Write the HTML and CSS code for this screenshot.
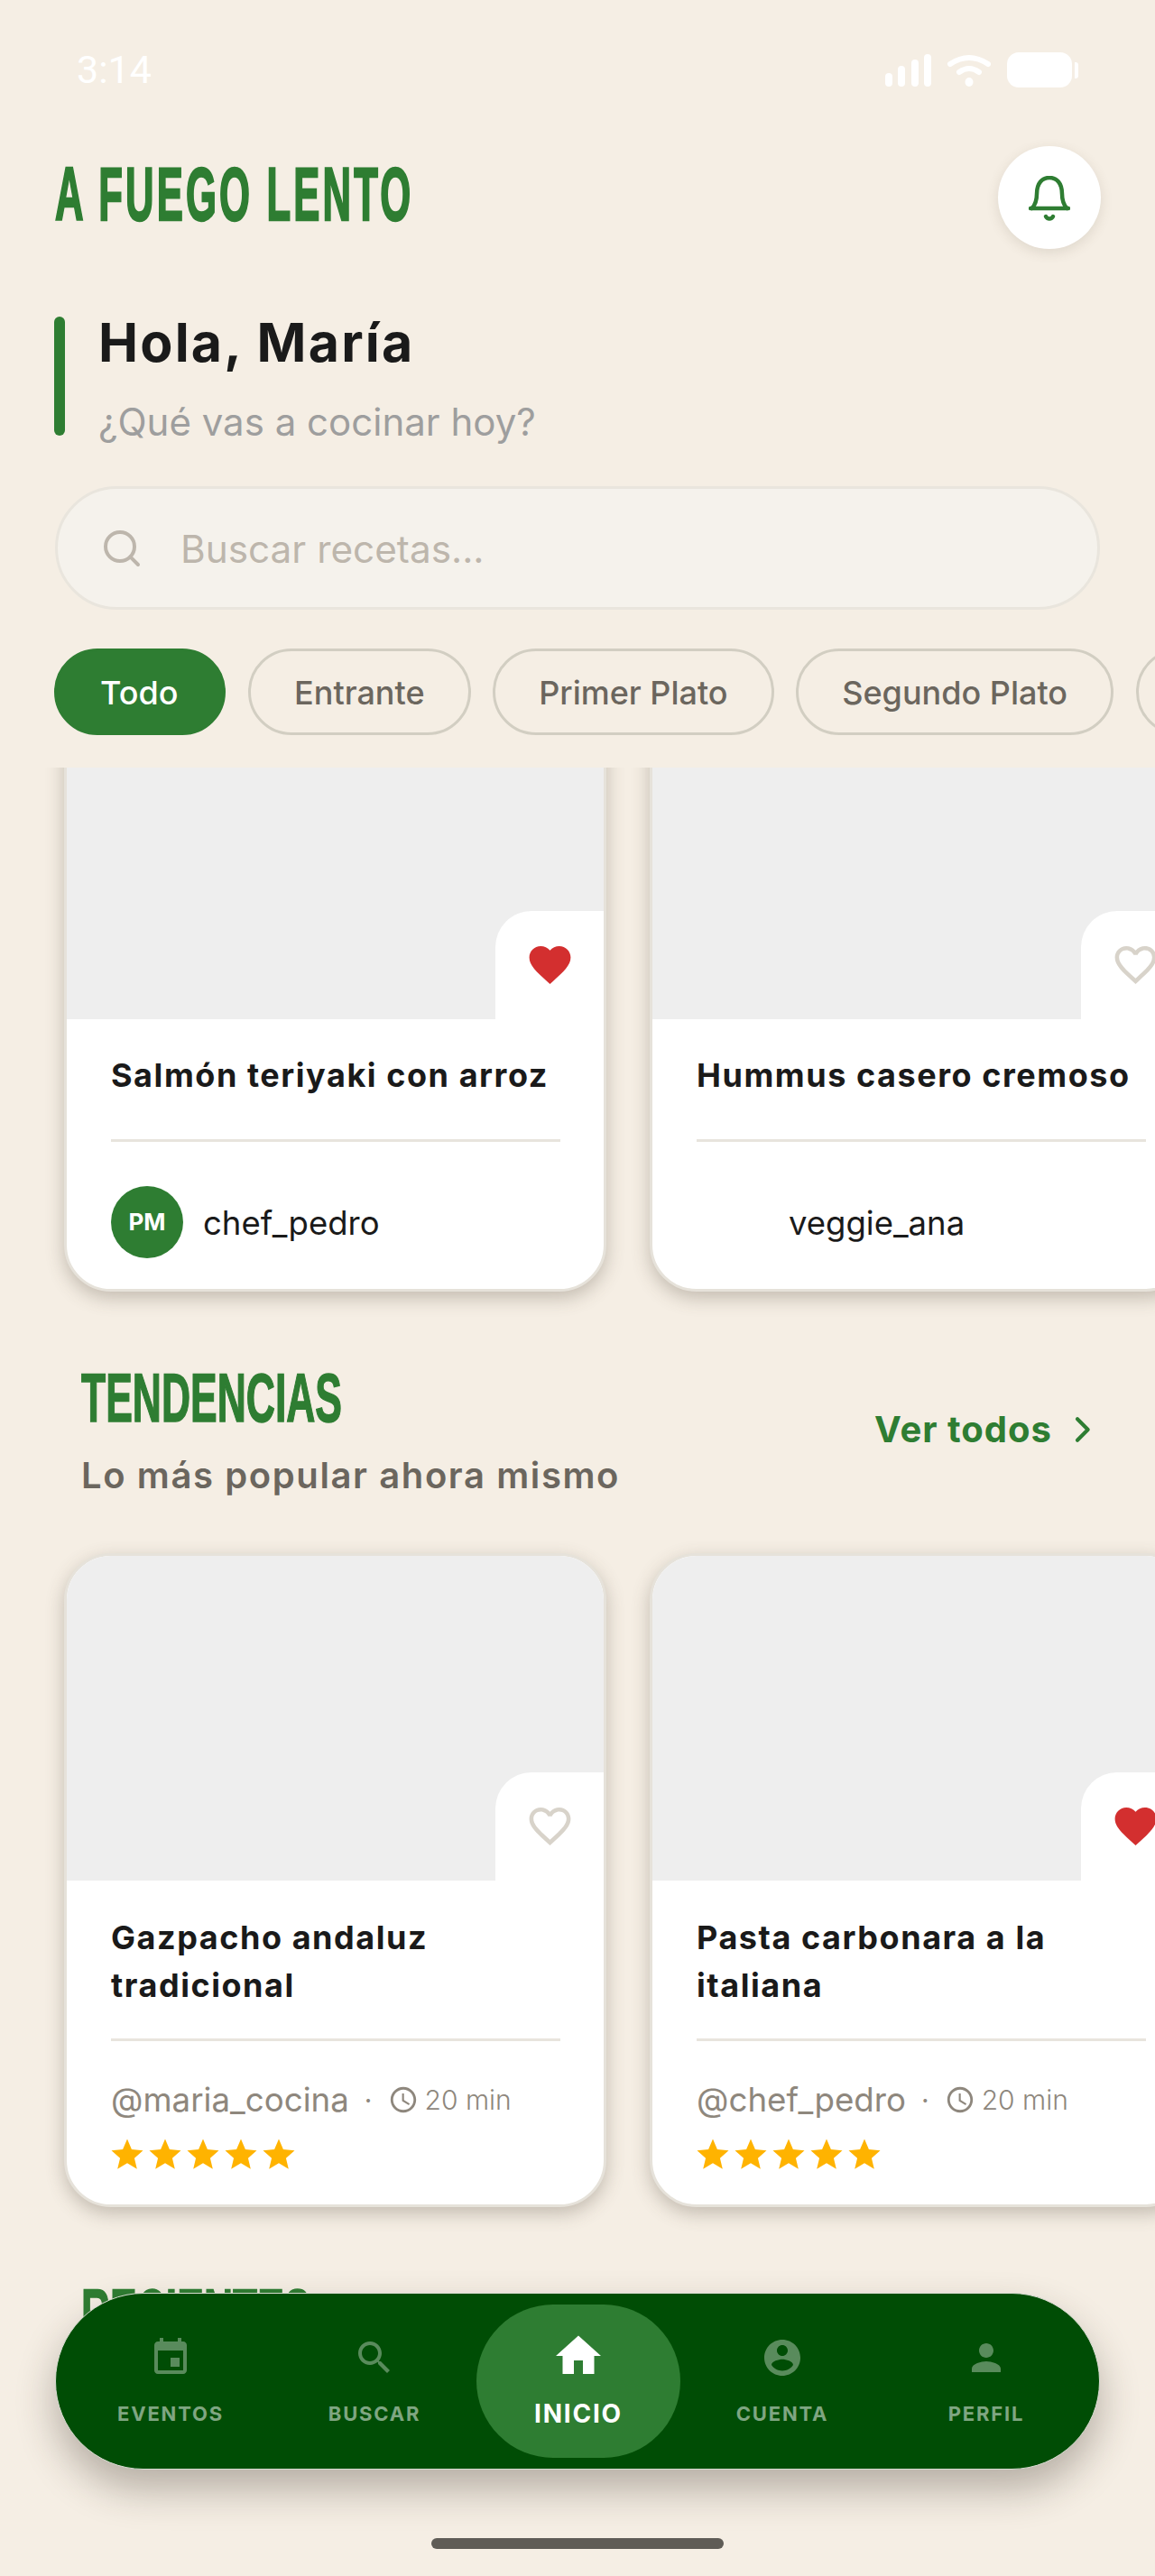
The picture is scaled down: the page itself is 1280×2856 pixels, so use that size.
FILE: index.html
```html
<!DOCTYPE html>
<html lang="es">
<head>
<meta charset="utf-8">
<title>A Fuego Lento</title>
<link rel="stylesheet" href="styles.css">
</head>
<body>
<div class="page">
  <div class="status">
    <span class="time">3:14</span>
    <div class="status-icons">
      <div class="signal"><i class="s1"></i><i class="s2"></i><i class="s3"></i><i class="s4"></i></div>
      <svg class="wifi" viewBox="0 0 49 36" fill="none" stroke="#fff" stroke-width="6" stroke-linecap="round"><path d="M4 11Q25 -3 46 11"/><path d="M14 20Q25 12 36 20"/><ellipse cx="25" cy="31" rx="4.5" ry="5" fill="#fff" stroke="none"/></svg>
      <div class="battery"><i class="battery-body"></i><i class="battery-tip"></i></div>
    </div>
  </div>

  <header class="header">
    <h1 class="brand">A FUEGO LENTO</h1>
    <button class="bell">
      <svg viewBox="0 0 46 50" width="46" height="50" fill="none" stroke="#2E7D32" stroke-width="4.5" stroke-linecap="round"><path d="M2 36h42"/><path d="M3.5 36c4-4 5.5-9 5.5-16C9 8 15 2 23 2s14 6 14 18c0 7 1.500 12 5.500 16"/><path d="M19 45a4.500 4.500 0 0 0 8 0"/></svg>
    </button>
  </header>

  <section class="greeting">
    <div class="greeting-bar"></div>
    <div class="greeting-text">
      <h2 class="hello">Hola, María</h2>
      <p class="question">¿Qué vas a cocinar hoy?</p>
    </div>
  </section>

  <div class="search">
    <svg class="search-icon" viewBox="0 0 24 24" fill="none" stroke="#BDB6AC" stroke-width="2" stroke-linecap="round"><circle cx="11" cy="11" r="8"/><path d="M21 21l-4.300-4.300"/></svg>
    <span class="search-text">Buscar recetas...</span>
  </div>

  <div class="chips">
    <span class="chip chip-on">Todo</span>
    <span class="chip">Entrante</span>
    <span class="chip">Primer Plato</span>
    <span class="chip">Segundo Plato</span>
    <span class="chip chip-more"></span>
  </div>

  <main class="feed">
    <div class="row row-first">
      <article class="card">
        <div class="card-image">
          <div class="fav"><svg class="heart" viewBox="0 0 24 24"><path fill="#D32F2F" d="M12 21.350l-1.450-1.320C5.400 15.360 2 12.280 2 8.500 2 5.420 4.420 3 7.500 3c1.740 0 3.410.81 4.500 2.090C13.090 3.810 14.760 3 16.500 3 19.580 3 22 5.420 22 8.500c0 3.780-3.400 6.860-8.550 11.540L12 21.350z"/></svg></div>
        </div>
        <div class="card-body card-body-user">
          <h3 class="card-title title-one">Salmón teriyaki con arroz</h3>
          <div class="user-row"><span class="avatar">PM</span><span class="user-name">chef_pedro</span></div>
        </div>
      </article>
      <article class="card">
        <div class="card-image">
          <div class="fav"><svg class="heart" viewBox="0 0 24 24"><path fill="#D8D3CA" d="M16.500 3c-1.740 0-3.410.81-4.500 2.090C10.910 3.810 9.240 3 7.500 3 4.420 3 2 5.420 2 8.500c0 3.780 3.400 6.860 8.550 11.540L12 21.350l1.450-1.320C18.600 15.360 22 12.280 22 8.500 22 5.420 19.580 3 16.500 3zm-4.400 15.550l-.1.100-.1-.1C7.140 14.240 4 11.390 4 8.500 4 6.500 5.500 5 7.500 5c1.540 0 3.040.99 3.570 2.360h1.870C13.460 5.990 14.960 5 16.500 5c2 0 3.500 1.500 3.500 3.500 0 2.890-3.140 5.740-7.900 10.050z"/></svg></div>
        </div>
        <div class="card-body card-body-user">
          <h3 class="card-title title-one">Hummus casero cremoso</h3>
          <div class="user-row"><span class="avatar avatar-blank"></span><span class="user-name">veggie_ana</span></div>
        </div>
      </article>
    </div>

    <div class="section-head">
      <div>
        <h2 class="section-title title-tend">TENDENCIAS</h2>
        <p class="section-sub">Lo más popular ahora mismo</p>
      </div>
      <a class="see-all">Ver todos<svg class="chevron" viewBox="0 0 24 24" fill="none" stroke="#2E7D32" stroke-width="2.500" stroke-linecap="round" stroke-linejoin="round"><path d="M9 5l7 7-7 7"/></svg></a>
    </div>

    <div class="row">
      <article class="card">
        <div class="card-image">
          <div class="fav"><svg class="heart" viewBox="0 0 24 24"><path fill="#D8D3CA" d="M16.500 3c-1.740 0-3.410.81-4.500 2.090C10.910 3.810 9.240 3 7.500 3 4.420 3 2 5.420 2 8.500c0 3.780 3.400 6.860 8.550 11.540L12 21.350l1.450-1.320C18.600 15.360 22 12.280 22 8.500 22 5.420 19.580 3 16.500 3zm-4.400 15.550l-.1.100-.1-.1C7.140 14.240 4 11.390 4 8.500 4 6.500 5.500 5 7.500 5c1.540 0 3.040.99 3.570 2.360h1.870C13.460 5.990 14.960 5 16.500 5c2 0 3.500 1.500 3.500 3.500 0 2.890-3.140 5.740-7.900 10.050z"/></svg></div>
        </div>
        <div class="card-body">
          <h3 class="card-title">Gazpacho andaluz<br>tradicional</h3>
          <div class="meta">
            <span class="author">@maria_cocina</span><span class="dot">·</span>
            <svg class="clock" viewBox="0 0 24 24"><path fill="#8E877D" d="M11.990 2C6.470 2 2 6.480 2 12s4.470 10 9.990 10C17.520 22 22 17.520 22 12S17.520 2 11.990 2zM12 20c-4.420 0-8-3.580-8-8s3.580-8 8-8 8 3.580 8 8-3.580 8-8 8zm.5-13H11v6l5.250 3.150.75-1.230-4.500-2.670z"/></svg>
            <span class="duration">20 min</span>
          </div>
          <div class="stars">
            <svg viewBox="0 0 24 24"><path d="M12 17.270L18.180 21l-1.640-6.810L22 9.240l-7.190-.61L12 2 9.190 8.630 2 9.240l5.460 4.950L5.820 21z"/></svg>
            <svg viewBox="0 0 24 24"><path d="M12 17.270L18.180 21l-1.640-6.810L22 9.240l-7.190-.61L12 2 9.190 8.630 2 9.240l5.460 4.950L5.820 21z"/></svg>
            <svg viewBox="0 0 24 24"><path d="M12 17.270L18.180 21l-1.640-6.810L22 9.240l-7.190-.61L12 2 9.190 8.630 2 9.240l5.460 4.950L5.820 21z"/></svg>
            <svg viewBox="0 0 24 24"><path d="M12 17.270L18.180 21l-1.640-6.810L22 9.240l-7.190-.61L12 2 9.190 8.630 2 9.240l5.460 4.950L5.820 21z"/></svg>
            <svg viewBox="0 0 24 24"><path d="M12 17.270L18.180 21l-1.640-6.810L22 9.240l-7.190-.61L12 2 9.190 8.630 2 9.240l5.460 4.950L5.820 21z"/></svg>
          </div>
        </div>
      </article>
      <article class="card">
        <div class="card-image">
          <div class="fav"><svg class="heart" viewBox="0 0 24 24"><path fill="#D32F2F" d="M12 21.350l-1.450-1.320C5.400 15.360 2 12.280 2 8.500 2 5.420 4.420 3 7.500 3c1.740 0 3.410.81 4.500 2.090C13.090 3.810 14.760 3 16.500 3 19.580 3 22 5.420 22 8.500c0 3.780-3.400 6.860-8.550 11.540L12 21.350z"/></svg></div>
        </div>
        <div class="card-body">
          <h3 class="card-title">Pasta carbonara a la<br>italiana</h3>
          <div class="meta">
            <span class="author">@chef_pedro</span><span class="dot">·</span>
            <svg class="clock" viewBox="0 0 24 24"><path fill="#8E877D" d="M11.990 2C6.470 2 2 6.480 2 12s4.470 10 9.990 10C17.520 22 22 17.520 22 12S17.520 2 11.990 2zM12 20c-4.420 0-8-3.580-8-8s3.580-8 8-8 8 3.580 8 8-3.580 8-8 8zm.5-13H11v6l5.250 3.150.75-1.230-4.500-2.670z"/></svg>
            <span class="duration">20 min</span>
          </div>
          <div class="stars">
            <svg viewBox="0 0 24 24"><path d="M12 17.270L18.180 21l-1.640-6.810L22 9.240l-7.190-.61L12 2 9.190 8.630 2 9.240l5.460 4.950L5.820 21z"/></svg>
            <svg viewBox="0 0 24 24"><path d="M12 17.270L18.180 21l-1.640-6.810L22 9.240l-7.190-.61L12 2 9.190 8.630 2 9.240l5.460 4.950L5.820 21z"/></svg>
            <svg viewBox="0 0 24 24"><path d="M12 17.270L18.180 21l-1.640-6.810L22 9.240l-7.190-.61L12 2 9.190 8.630 2 9.240l5.460 4.950L5.820 21z"/></svg>
            <svg viewBox="0 0 24 24"><path d="M12 17.270L18.180 21l-1.640-6.810L22 9.240l-7.190-.61L12 2 9.190 8.630 2 9.240l5.460 4.950L5.820 21z"/></svg>
            <svg viewBox="0 0 24 24"><path d="M12 17.270L18.180 21l-1.640-6.810L22 9.240l-7.190-.61L12 2 9.190 8.630 2 9.240l5.460 4.950L5.820 21z"/></svg>
          </div>
        </div>
      </article>
    </div>

    <div class="section-head">
      <div><h2 class="section-title title-rec">RECIENTES</h2></div>
    </div>
  </main>

  <nav class="tabbar">
    <a class="tab">
      <svg class="tab-icon" viewBox="0 0 24 24"><path d="M17 12h-5v5h5v-5zM16 1v2H8V1H6v2H5c-1.110 0-1.990.9-1.990 2L3 19c0 1.100.89 2 2 2h14c1.100 0 2-.9 2-2V5c0-1.100-.9-2-2-2h-1V1h-2zm3 18H5V8h14v11z"/></svg>
      <span class="tab-label">EVENTOS</span>
    </a>
    <a class="tab">
      <svg class="tab-icon" viewBox="0 0 24 24"><path d="M15.500 14h-.79l-.28-.27C15.410 12.590 16 11.110 16 9.500 16 5.910 13.090 3 9.500 3S3 5.910 3 9.500 5.910 16 9.500 16c1.610 0 3.090-.59 4.230-1.570l.27.28v.79l5 4.990L20.490 19l-4.990-5zm-6 0C7.010 14 5 11.990 5 9.500S7.010 5 9.500 5 14 7.010 14 9.500 11.990 14 9.500 14z"/></svg>
      <span class="tab-label">BUSCAR</span>
    </a>
    <a class="tab tab-on">
      <svg class="tab-icon" viewBox="0 0 24 24"><path d="M10 20v-6h4v6h5v-8h3L12 3 2 12h3v8z"/></svg>
      <span class="tab-label">INICIO</span>
    </a>
    <a class="tab">
      <svg class="tab-icon" viewBox="0 0 24 24"><path d="M12 2C6.480 2 2 6.480 2 12s4.480 10 10 10 10-4.480 10-10S17.520 2 12 2zm0 3c1.660 0 3 1.340 3 3s-1.340 3-3 3-3-1.340-3-3 1.340-3 3-3zm0 14.200c-2.500 0-4.710-1.280-6-3.220.03-1.990 4-3.080 6-3.080 1.990 0 5.970 1.090 6 3.080-1.290 1.940-3.500 3.220-6 3.220z"/></svg>
      <span class="tab-label">CUENTA</span>
    </a>
    <a class="tab">
      <svg class="tab-icon" viewBox="0 0 24 24"><path d="M12 12c2.210 0 4-1.790 4-4s-1.790-4-4-4-4 1.790-4 4 1.790 4 4 4zm0 2c-2.670 0-8 1.340-8 4v2h16v-2c0-2.660-5.330-4-8-4z"/></svg>
      <span class="tab-label">PERFIL</span>
    </a>
  </nav>
  <div class="home-bar"></div>
</div>
</body>
</html>
```
FILE: styles.css
```css
* { box-sizing: border-box; margin: 0; padding: 0; }
html, body { width: 1280px; height: 2856px; overflow: hidden; }
body { background: #F5EEE4; font-family: "Inter", "Liberation Sans", sans-serif; color: #1A1A1A; }
.page { position: relative; width: 1280px; height: 2856px; overflow: hidden; display: flex; flex-direction: column; }

/* status bar */
.status { height: 162px; flex: none; display: flex; justify-content: space-between; align-items: flex-start; padding: 52px 85px 0 85px; }
.time { font: 400 43px/50px "Roboto", sans-serif; color: #fff; }
.status-icons { display: flex; align-items: flex-start; margin-top: 6px; margin-right: 0; }
.signal { display: flex; align-items: flex-end; gap: 6.300px; height: 36px; margin-top: 2px; }
.signal i { width: 8px; background: #fff; border-radius: 4px; display: block; }
.s1 { height: 15px; } .s2 { height: 23px; } .s3 { height: 30px; } .s4 { height: 36px; }
.wifi { width: 49px; height: 36px; margin-left: 17px; margin-top: 2px; }
.battery { display: flex; align-items: center; margin-left: 18px; height: 39px; }
.battery-body { width: 72px; height: 39px; background: #fff; border-radius: 13px; display: block; }
.battery-tip { width: 4px; height: 18px; background: #fff; border-radius: 0 3px 3px 0; display: block; margin-left: 3px; }

/* header */
.header { height: 114px; flex: none; display: flex; justify-content: space-between; align-items: center; padding: 0 60px 0 61px; }
.brand { font: 700 84px/90px "Liberation Sans", sans-serif; color: #2E7D32; -webkit-text-stroke: 2.500px #2E7D32; white-space: nowrap; transform: scaleX(.52); transform-origin: left center; letter-spacing: 6px; margin-bottom: 8px; }
.bell { width: 114px; height: 114px; border: 0; border-radius: 50%; background: #fff; box-shadow: 0 4px 14px rgba(90, 80, 60, .14); display: flex; align-items: center; justify-content: center; padding-top: 2px; }

/* greeting */
.greeting { flex: none; margin: 75px 0 0 60px; height: 132px; display: flex; gap: 37px; }
.greeting-bar { width: 12px; background: #2E7D32; border-radius: 6px; }
.greeting-text { display: flex; flex-direction: column; justify-content: space-between; }
.hello { font: 700 59px/58px "Inter", sans-serif; color: #1A1A1A; letter-spacing: 2.200px; }
.question { font: 400 42px/50px "Inter", sans-serif; color: #9E9E9E; margin-bottom: -10px; }

/* search */
.search { flex: none; margin: 56px 61px 0 61px; height: 137px; display: flex; align-items: center; gap: 41px; padding: 2px 0 0 47px; background: #F5F2EC; border: 3px solid #E9E5DD; border-radius: 69px; }
.search-icon { width: 48px; height: 48px; flex: none; margin-top: -2px; }
.search-text { font: 400 42.300px/50px "Inter", sans-serif; color: #BDB6AC; }

/* chips */
.chips { flex: none; margin: 43px 0 0 60px; display: flex; gap: 24.600px; height: 96px; white-space: nowrap; }
.chip { flex: none; height: 96px; padding: 2px 48px 0; display: flex; align-items: center; border: 3px solid #D2CEC2; border-radius: 48px; font: 500 36px/46px "Inter", sans-serif; color: #6B665E; }
.chip-on { background: #2E7D32; border-color: #2E7D32; color: #fff; padding-right: 50px; }
.chip-more { width: 200px; }

/* feed */
.feed { flex: 1; margin-top: 36px; overflow: hidden; padding-left: 71px; min-height: 0; }
.row { display: flex; gap: 48px; width: 1400px; }
.row-first { margin-top: -84px; }
.card { flex: none; width: 601px; background: #fff; border: 3px solid #E6E2DA; border-radius: 52px; box-shadow: 0 7px 20px rgba(80, 70, 55, .3); overflow: hidden; }
.card-image { position: relative; height: 360px; background: #EEEEEE; }
.fav { position: absolute; right: 0; bottom: 0; width: 120px; height: 120px; background: #fff; border-radius: 40px 0 0 0; display: flex; align-items: center; justify-content: center; }
.heart { width: 55px; height: 55px; margin-top: -1px; }
.card-body { padding: 37px 48px 34px 49px; }
.card-body-user { padding-top: 36px; padding-bottom: 34px; }
.card-title { font: 700 36px/53px "Inter", sans-serif; letter-spacing: 1.550px; color: #1A1A1A; padding-bottom: 32px; border-bottom: 3px solid #E8E4DD; width: 498px; white-space: nowrap; }
.title-one { padding-bottom: 44px; }
.user-row { display: flex; align-items: center; gap: 22px; margin-top: 49px; }
.avatar { width: 80px; height: 80px; flex: none; border-radius: 50%; background: #2E7D32; color: #fff; display: flex; align-items: center; justify-content: center; font: 700 26px/30px "Inter", sans-serif; }
.avatar-blank { background: #fff; }
.user-name { font: 400 36.500px/44px "Inter", sans-serif; color: #1A1A1A; padding-top: 2px; }
.meta { display: flex; align-items: center; margin-top: 40px; height: 50px; color: #8E877D; }
.author { font: 400 36.700px/50px "Inter", sans-serif; }
.dot { font: 400 30px/50px "Inter", sans-serif; margin: 0 17px; }
.clock { width: 34px; height: 34px; flex: none; margin-right: 7px; }
.duration { font: 300 30px/50px "Inter", sans-serif; }
.stars { display: flex; margin: 15px 0 0 -3.500px; height: 42px; }
.stars svg { width: 42px; height: 42px; fill: #FFB300; flex: none; display: block; }

/* sections */
.section-head { display: flex; justify-content: space-between; align-items: center; margin-top: 82px; padding: 0 61px 61px 19px; width: 1209px; }
.section-title { font: 700 76px/72px "Liberation Sans", sans-serif; color: #2E7D32; -webkit-text-stroke: 1.500px #2E7D32; white-space: nowrap; transform-origin: left center; transform: scaleX(.585); }
.section-sub { font: 600 40px/50px "Inter", sans-serif; letter-spacing: 1.600px; color: #6B665E; margin-top: 25px; }
.see-all { display: flex; align-items: center; gap: 13px; font: 700 40px/50px "Inter", sans-serif; letter-spacing: 1px; color: #2E7D32; margin-top: -6px; }
.chevron { width: 40px; height: 40px; }

/* tab bar */
.tabbar { position: absolute; left: 61px; top: 2542px; width: 1158px; height: 196px; padding: 12px 12px 12px 14px; display: flex; background: #004D05; border: 1px solid #D8DCD2; border-radius: 98px; box-shadow: 0 22px 44px rgba(50, 40, 30, .32); }
.tab { flex: 1; display: flex; flex-direction: column; align-items: center; justify-content: center; gap: 23px; border-radius: 86px; color: rgba(255, 255, 255, .5); }
.tab-icon { width: 48px; height: 48px; fill: rgba(255, 255, 255, .35); flex: none; }
.tab-label { font: 700 22px/30px "Inter", sans-serif; letter-spacing: 1.800px; }
.tab-on { background: #2E7D32; color: #fff; gap: 19px; padding-bottom: 8px; }
.tab-on .tab-icon { width: 60px; height: 60px; fill: #fff; }
.tab-on .tab-label { font-size: 28px; }
.home-bar { position: absolute; left: 478px; top: 2814px; width: 324px; height: 12px; border-radius: 6px; background: #5F5C56; }
```
